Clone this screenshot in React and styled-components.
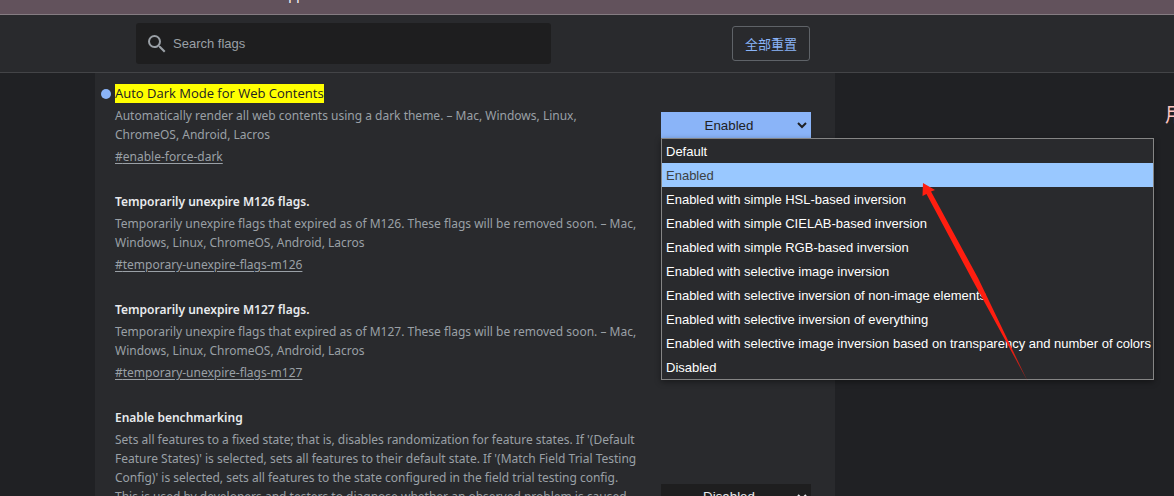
import React, { useState } from 'react';
import styled, { createGlobalStyle } from 'styled-components';

const modes = [
	'Default',
	'Enabled',
	'Enabled with simple HSL-based inversion',
	'Enabled with simple CIELAB-based inversion',
	'Enabled with simple RGB-based inversion',
	'Enabled with selective image inversion',
	'Enabled with selective inversion of non-image elements',
	'Enabled with selective inversion of everything',
	'Enabled with selective image inversion based on transparency and number of colors',
	'Disabled',
];

const flags = [
	{
		id: 'enable-force-dark',
		name: 'Auto Dark Mode for Web Contents',
		description:
			'Automatically render all web contents using a dark theme. – Mac, Windows, Linux, ChromeOS, Android, Lacros',
		options: modes,
		value: 'Enabled',
		matched: true,
		open: true,
	},
	{
		id: 'temporary-unexpire-flags-m126',
		name: 'Temporarily unexpire M126 flags.',
		description:
			'Temporarily unexpire flags that expired as of M126. These flags will be removed soon. – Mac, Windows, Linux, ChromeOS, Android, Lacros',
	},
	{
		id: 'temporary-unexpire-flags-m127',
		name: 'Temporarily unexpire M127 flags.',
		description:
			'Temporarily unexpire flags that expired as of M127. These flags will be removed soon. – Mac, Windows, Linux, ChromeOS, Android, Lacros',
	},
	{
		id: 'enable-benchmarking',
		name: 'Enable benchmarking',
		description:
			"Sets all features to a fixed state; that is, disables randomization for feature states. If '(Default Feature States)' is selected, sets all features to their default state. If '(Match Field Trial Testing Config)' is selected, sets all features to the state configured in the field trial testing config. This is used by developers and testers to diagnose whether an observed problem is caused by a non-default base::Feature configuration. This flag is automatically reset after 3 restarts and will be off from the 4th restart. On the 3rd restart, the flag will appear to be off. – Mac, Windows, Linux, ChromeOS, Android, Lacros",
		options: ['Disabled', 'Enabled'],
		value: 'Disabled',
	},
];

const Flag = ({ flag }) => {
	const [value, setValue] = useState(flag.value);

	return (
		<Row>
			<Details>
				<Name $matched={flag.matched}>
					{flag.matched ? <mark>{flag.name}</mark> : flag.name}
				</Name>
				<Description>{flag.description}</Description>
				<Permalink href={`#${flag.id}`}>#{flag.id}</Permalink>
			</Details>
			<Control>
				{flag.options && (
					<Select
						aria-label={flag.name}
						$changed={flag.matched}
						value={value}
						onChange={(e) => setValue(e.target.value)}
					>
						{flag.options.map((option) => (
							<option key={option}>{option}</option>
						))}
					</Select>
				)}
				{flag.open && (
					<Popup role="listbox" aria-label={flag.name}>
						{flag.options.map((option) => (
							<Option
								key={option}
								role="option"
								aria-selected={option === value}
								$active={option === value}
								onClick={() => setValue(option)}
							>
								{option}
							</Option>
						))}
						<Pointer viewBox="0 0 106 198" aria-hidden="true">
							<defs>
								<linearGradient id="fade" x1="0" y1="0" x2="0" y2="1">
									<stop offset="0.8" stopColor="#ff1e10" />
									<stop offset="1" stopColor="#ff1e10" stopOpacity="0.5" />
								</linearGradient>
							</defs>
							<path d="M1 0 L13 7 L9 8.5 L56 95 L105.5 198 L51 98 L4.5 11 L0.5 13 Z" fill="url(#fade)" />
						</Pointer>
					</Popup>
				)}
			</Control>
		</Row>
	);
};

const App = () => {
	const [query, setQuery] = useState('');

	return (
		<Page>
			<GlobalStyle />
			<TitleBar>App</TitleBar>
			<Header>
				<SearchBox>
					<SearchIcon viewBox="0 0 24 24" aria-hidden="true">
						<path d="M15.5 14h-.79l-.28-.27A6.471 6.471 0 0 0 16 9.5 6.5 6.5 0 1 0 9.5 16c1.61 0 3.09-.59 4.23-1.57l.27.28v.79l5 4.99L20.49 19l-4.99-5zm-6 0C7.01 14 5 11.99 5 9.5S7.01 5 9.5 5 14 7.01 14 9.5 11.99 14 9.5 14z" />
					</SearchIcon>
					<SearchInput
						type="text"
						aria-label="Search flags"
						placeholder="Search flags"
						value={query}
						onChange={(e) => setQuery(e.target.value)}
					/>
				</SearchBox>
				<ResetButton type="button">全部重置</ResetButton>
			</Header>
			<Body>
				<Panel>
					{flags.map((flag) => (
						<Flag key={flag.id} flag={flag} />
					))}
				</Panel>
				<SideNote>用</SideNote>
			</Body>
		</Page>
	);
};

const GlobalStyle = createGlobalStyle`
	html {
		color-scheme: dark;
		overflow: hidden;
	}
	body {
		margin: 0;
		background: #202124;
		font-family: 'Noto Sans', 'Noto Sans CJK SC', sans-serif;
		font-size: 12px;
		line-height: 19px;
	}
	* {
		box-sizing: border-box;
	}
`;

const Page = styled.div`
	display: flex;
	flex-direction: column;
	height: 100vh;
	overflow: hidden;
`;

const TitleBar = styled.div`
	display: flex;
	flex: none;
	align-items: flex-end;
	height: 15px;
	padding: 0 0 11px 280px;
	border-bottom: 1px solid #857c82;
	background: #62525c;
	color: #fff;
	font-size: 13px;
	line-height: 16px;
	overflow: hidden;
`;

const Header = styled.header`
	display: flex;
	flex: none;
	align-items: center;
	gap: 181px;
	height: 58px;
	padding-left: 136px;
	border-bottom: 1px solid #434447;
	background: #292a2d;
`;

const SearchBox = styled.div`
	display: flex;
	align-items: center;
	gap: 4px;
	width: 415px;
	height: 41px;
	padding-left: 9px;
	border-radius: 3px;
	background: #1e1e1f;
`;

const SearchIcon = styled.svg`
	width: 24px;
	height: 24px;
	fill: #9aa0a6;
`;

const SearchInput = styled.input`
	flex: 1;
	padding: 0;
	border: none;
	outline: none;
	background: transparent;
	color: #e8eaed;
	font-family: 'Liberation Sans', Arial, sans-serif;
	font-size: 13px;
	&::placeholder {
		color: #9aa0a6;
	}
`;

const ResetButton = styled.button`
	width: 78px;
	height: 35px;
	padding: 0;
	border: 1px solid #5f6368;
	border-radius: 3px;
	background: transparent;
	color: #8ab4f8;
	font-family: 'Noto Sans CJK SC', sans-serif;
	font-size: 13px;
	cursor: pointer;
`;

const Body = styled.main`
	display: flex;
	flex: 1;
	justify-content: space-between;
	min-height: 0;
	padding-left: 95px;
`;

const Panel = styled.section`
	display: flex;
	flex: none;
	flex-direction: column;
	gap: 26px;
	width: 740px;
	padding: 11px 24px 0 20px;
	background: #292a2d;
`;

const Row = styled.article`
	display: flex;
	align-items: center;
	justify-content: space-between;
`;

const Details = styled.div`
	display: flex;
	flex-direction: column;
	align-items: flex-start;
	width: 525px;
`;

const Name = styled.h3`
	position: relative;
	height: 20px;
	margin: 0 0 2px;
	color: #e8eaed;
	font-size: 12px;
	font-weight: 600;
	line-height: 20px;
	mark {
		display: block;
		background: #ff0;
		color: #202124;
		font-family: 'Open Sans', sans-serif;
		font-size: 13px;
		font-weight: 400;
		line-height: 19px;
	}
	&::before {
		content: '';
		display: ${(props) => (props.$matched ? 'block' : 'none')};
		position: absolute;
		top: 5px;
		left: -14px;
		width: 10px;
		height: 10px;
		border-radius: 50%;
		background: #8ab4f8;
	}
`;

const Description = styled.p`
	margin: 0 0 3px;
	color: #9aa0a6;
`;

const Permalink = styled.a`
	color: #9aa0a6;
	text-underline-offset: 2px;
`;

const Control = styled.div`
	position: relative;
	width: 150px;
`;

const Select = styled.select`
	display: block;
	width: 100%;
	height: 26px;
	padding: 0 2px 0 0;
	border: 1px solid transparent;
	border-radius: 0;
	background-color: ${(props) => (props.$changed ? '#8ab4f8' : '#1e1e1f')};
	color: ${(props) => (props.$changed ? '#202124' : '#e8eaed')};
	font-family: 'Liberation Sans', Arial, sans-serif;
	text-align-last: center;
`;

const Popup = styled.ul`
	position: absolute;
	top: 100%;
	left: 0;
	z-index: 1;
	min-width: 493px;
	margin: 0;
	padding: 0;
	border: 1px solid #858585;
	background: #292a2d;
	box-shadow: 0 2px 6px rgba(0, 0, 0, 0.4);
	list-style: none;
`;

const Option = styled.li`
	padding: 2px 2px 0 4px;
	background: ${(props) => (props.$active ? '#99c8ff' : 'transparent')};
	color: ${(props) => (props.$active ? '#3c4043' : '#fff')};
	font-family: 'Liberation Sans', Arial, sans-serif;
	font-size: 13px;
	line-height: 22px;
	white-space: nowrap;
	cursor: default;
`;

const Pointer = styled.svg`
	position: absolute;
	top: 44px;
	left: 260px;
	width: 106px;
	height: 198px;
	pointer-events: none;
`;

const SideNote = styled.p`
	flex: none;
	width: 9px;
	margin: 27px 0 0;
	color: #ffc4c0;
	font-family: 'Noto Sans CJK SC', sans-serif;
	font-size: 20px;
	line-height: 28px;
	overflow: hidden;
`;

export default App;
